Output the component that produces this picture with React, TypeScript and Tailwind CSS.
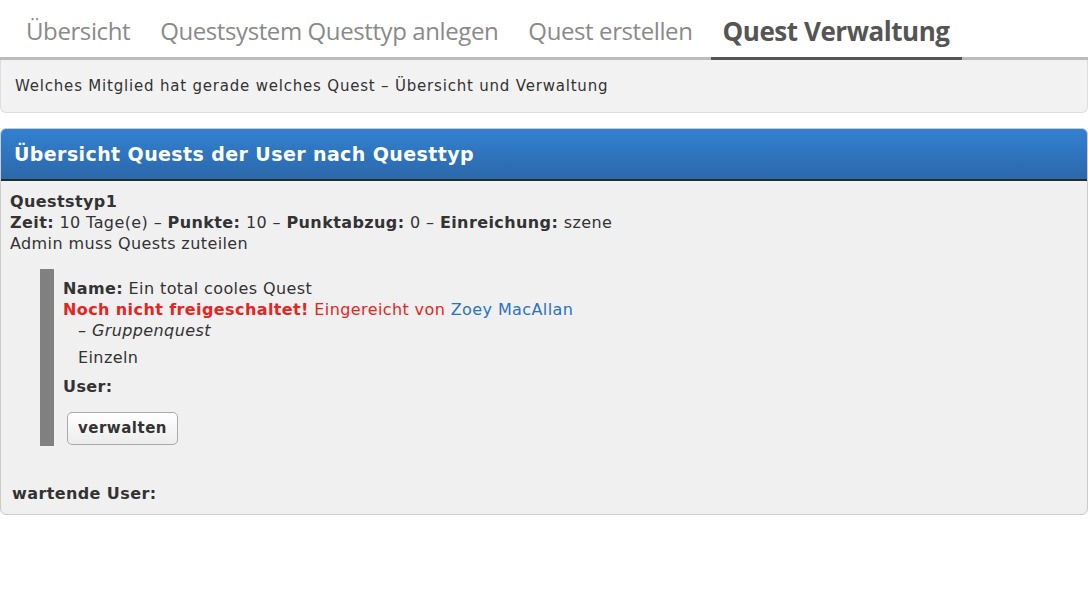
import React from "react";

const tabs = ["Übersicht", "Questsystem Questtyp anlegen", "Quest erstellen", "Quest Verwaltung"];

function Tabs() {
  return (
    <nav className="flex items-end border-b-[3px] border-[#bbbbbb] pl-[11px] h-[60px]">
      {tabs.map((t, i) => {
        const active = i === tabs.length - 1;
        return (
          <div
            key={t}
            className={
              active
                ? "ml-[3px] px-[12px] pb-[11px] -mb-[3px] border-b-[3px] border-[#555555] text-[#555555] font-bold text-[26px] leading-[30px] tracking-[-0.45px]"
                : "px-[15px] pb-[11px] text-[#8a8a8a] text-[24px] leading-[30px] tracking-[-0.4px]"
            }
            style={{ fontFamily: "'Open Sans', sans-serif" }}
          >
            {t}
          </div>
        );
      })}
    </nav>
  );
}

function Label({ children }: { children: React.ReactNode }) {
  return <span className="font-bold">{children}</span>;
}

export default function App() {
  return (
    <div className="w-[1088px] h-[590px] bg-white text-[#333333]" style={{ fontFamily: "'DejaVu Sans', sans-serif" }}>
      <Tabs />

      <div className="bg-[#f2f2f2] border border-t-0 border-[#dddddd] rounded-b-[6px] h-[53px] flex items-center px-[14px] text-[15px] tracking-[0.8px] pt-[1px]">
        Welches Mitglied hat gerade welches Quest – Übersicht und Verwaltung
      </div>

      <section className="mt-[15px] border border-[#cccccc] rounded-[6px] overflow-hidden bg-[#f0f0f0]">
        <h2 className="h-[52px] flex items-center px-[13px] text-white font-bold text-[19px] tracking-[0.4px] bg-gradient-to-b from-[#3281d1] to-[#2c68aa] border-b-2 border-[#1f2f2a]">
          Übersicht Quests der User nach Questtyp
        </h2>

        <div className="px-[9px] pt-[10px] pb-[10px] text-[16px] leading-[21px] tracking-[0.4px]">
          <div className="font-bold">Queststyp1</div>
          <div>
            <Label>Zeit:</Label> 10 Tage(e) – <Label>Punkte:</Label> 10 – <Label>Punktabzug:</Label> 0 – <Label>Einreichung:</Label> szene
          </div>
          <div>Admin muss Quests zuteilen</div>

          <div className="mt-[15px] ml-[30px] flex">
            <div className="w-[14px] bg-[#808080]" />
            <div className="pl-[9px] pt-[9px] pb-[1px]">
              <div>
                <Label>Name:</Label> Ein total cooles Quest
              </div>
              <div className="text-[#e3261f]">
                <Label>Noch nicht freigeschaltet!</Label> Eingereicht von{" "}
                <span className="text-[#2a72c4]">Zoey MacAllan</span>
              </div>
              <div className="pl-[15px] italic">– Gruppenquest</div>
              <div className="pl-[15px] mt-[6px]">Einzeln</div>
              <div className="mt-[8px] font-bold">User:</div>
              <button className="mt-[15px] ml-[4px] h-[33px] px-[10px] rounded-[5px] border border-[#aaaaaa] bg-gradient-to-b from-white to-[#ececec] font-bold text-[15px] tracking-[0.5px] text-[#333333]">
                verwalten
              </button>
            </div>
          </div>

          <div className="mt-[37px] ml-[2px] font-bold">wartende User:</div>
        </div>
      </section>
    </div>
  );
}
